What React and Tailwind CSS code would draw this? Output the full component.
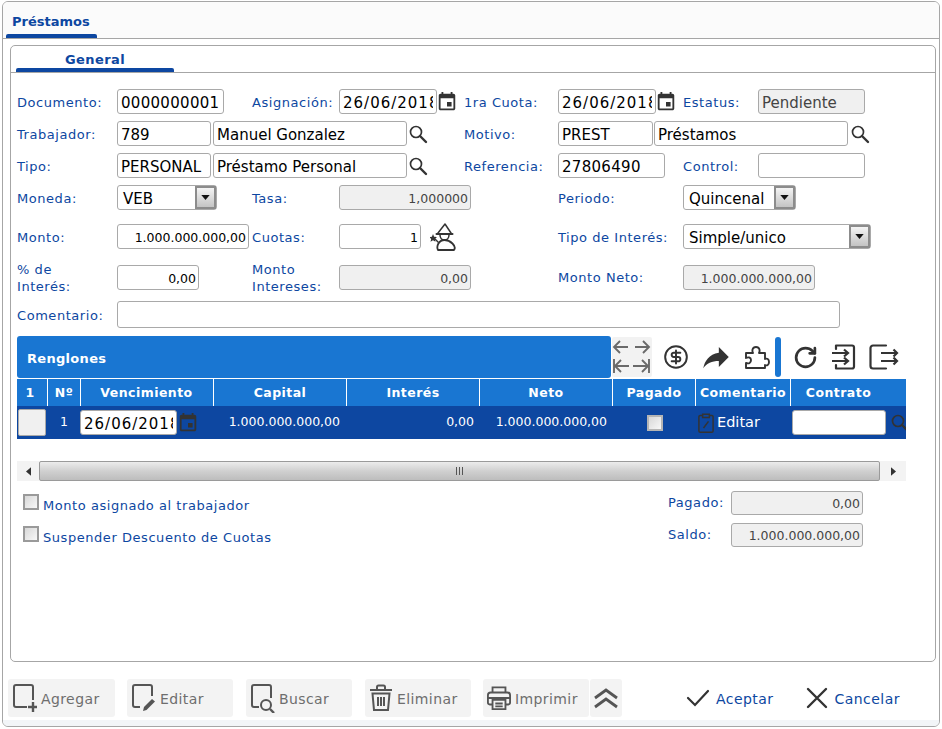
import React from "react";
import { CircleDollarSign, RotateCw } from "lucide-react";

const Label = ({ w, children, className = "", flat }) => (
  <div className={`${w} shrink-0 text-[#0d47a1] text-[13px] tracking-[0.55px] leading-[17px] ${flat ? "" : "pt-[2px]"} ${className}`}>{children}</div>
);

const Field = ({ w, h = "h-[25px]", value = "", right, gray, small, digits, date }) => (
  <div className={`${w} ${h} shrink-0`}>
    <input
      readOnly
      value={value}
      className={`block box-border h-full w-full rounded-[3px] border border-[#a9a9a9] outline-none [font-family:'DejaVu_Sans',sans-serif] ${
        small ? "text-[12.5px] pt-[1px] pl-[3px] pr-[2px]" : "text-[15px] pt-[2px] px-[3px]"
      } ${right ? "text-right" : ""} ${gray ? "bg-[#f0f0f0] text-[#444444]" : "bg-white text-black"} ${
        digits ? "tracking-[0.3px]" : ""
      } ${date ? "tracking-[1px]" : ""}`}
    />
  </div>
);

const Calendar = ({ className = "text-[#333333]" }) => (
  <svg viewBox="0 0 24 24" className={`h-[22px] w-[22px] shrink-0 ${className}`} fill="currentColor">
    <path d="M17 12h-5v5h5v-5zM16 1v2H8V1H6v2H5c-1.11 0-1.99.9-1.99 2L3 19c0 1.1.89 2 2 2h14c1.1 0 2-.9 2-2V5c0-1.1-.9-2-2-2h-1V1h-2zm3 18H5V8h14v11z" />
  </svg>
);

const Search = ({ className = "text-[#333333]" }) => (
  <svg viewBox="0 0 20 20" className={`h-[20px] w-[20px] shrink-0 ${className}`} fill="none" stroke="currentColor">
    <circle cx="8" cy="8" r="5.5" strokeWidth="1.7" />
    <path d="M12 12l6 6" strokeWidth="2.4" strokeLinecap="round" />
  </svg>
);

const Select = ({ w, h = "h-[25px]", value }) => (
  <div className={`${w} ${h} shrink-0 box-border flex items-center justify-between rounded-[3px] border border-[#a9a9a9] bg-white pl-[5px] text-[15px] text-black`}>
    <span className="pt-[3px]">{value}</span>
    <span className="flex h-full w-[21px] items-center justify-center border-[2px] border-[#8c8c8c] bg-gradient-to-b from-[#f4f4f4] to-[#c4c4c4]">
      <svg viewBox="0 0 10 6" className="h-[5px] w-[9px]"><path d="M0 0h10L5 6z" fill="#111111" /></svg>
    </span>
  </div>
);

const Wizard = () => (
  <svg viewBox="0 0 26 28" className="h-[28px] w-[26px] shrink-0" fill="none" stroke="#333333" strokeWidth="1.5" strokeLinejoin="round" strokeLinecap="round">
    <path d="M8 10l7-9 2 3 4 6" />
    <path d="M6.500 11h16" strokeWidth="2" />
    <path d="M10 12c0 3 2 5 4.500 5s4.500-2 4.500-5" />
    <path d="M8 27c-2-4 1-10 6.500-10S27 23 24 27z" strokeWidth="1.800" />
    <path d="M4 15l4 4" />
    <path d="M3 11l1.100 2.700 2.900.3-2.200 1.900.7 2.900L3 17.300.5 18.800l.7-2.900L-1 14l2.900-.3z" fill="#333333" stroke="none" />
  </svg>
);

const ExpandIcon = () => (
  <svg viewBox="0 0 40 40" className="h-[40px] w-[40px]" fill="none" stroke="#6a6a6a" strokeWidth="1.900">
    <path d="M2 10h14M8 4L2 10l6 6" />
    <path d="M23 10h14M31 4l6 6-6 6" />
    <path d="M3 29h14M9 23l-6 6 6 6M2 22v14" />
    <path d="M21 29h15M30 23l6 6-6 6M37 22v14" />
  </svg>
);

const ShareIcon = () => (
  <svg viewBox="0 0 24 24" className="h-[34px] w-[34px] shrink-0" fill="#333333">
    <path d="M14 9V5l7 7-7 7v-4.100c-5 0-8.500 1.600-11 5.100 1-5 4-10 11-11z" />
  </svg>
);

const PuzzleIcon = () => (
  <svg viewBox="0 0 25 23" className="h-[23px] w-[25px] shrink-0" fill="none" stroke="#333333" strokeWidth="1.900" strokeLinejoin="round">
    <path d="M1 7h7c-1-2-1-6 3-6s4 4 3 6h6v6c2-1 4 0 4 3s-2 4-4 3v3H1v-5c3 1 5 0 5-3s-3-3-5-2z" />
  </svg>
);

const EnterIcon = () => (
  <svg viewBox="0 0 26 26" className="h-[26px] w-[26px]" fill="none" stroke="#333333" strokeWidth="2.200">
    <path d="M5 1.500h16a2 2 0 0 1 2 2v19a2 2 0 0 1-2 2H5M5 1.500V5M5 24.500V21" strokeLinecap="round" />
    <path d="M1 9h16M13 5.500L17 9l-4 3.500M1 17h16M13 13.500L17 17l-4 3.500" />
  </svg>
);

const ExitIcon = () => (
  <svg viewBox="0 0 30 26" className="h-[26px] w-[30px]" fill="none" stroke="#333333" strokeWidth="2.200">
    <path d="M17 1.500H4a2.500 2.500 0 0 0-2.500 2.500v18A2.500 2.500 0 0 0 4 24.500h13" strokeLinecap="round" />
    <path d="M12 9h16M24.500 5.500L28 9l-3.500 3.500M12 17h16M24.500 13.500L28 17l-3.500 3.500" />
  </svg>
);

const Box = ({ className = "" }) => (
  <span className={`box-border block h-[16px] w-[16px] shrink-0 border-[2px] border-[#9a9a9a] bg-gradient-to-br from-[#d8d8d8] to-[#f8f8f8] ${className}`} />
);

const ico = { fill: "none", stroke: "#555555", strokeWidth: 2 };
const AddIcon = () => (
  <svg viewBox="0 0 26 30" className="h-[30px] w-[26px] shrink-0" {...ico}>
    <path d="M21 17V4a2 2 0 0 0-2-2H4a2 2 0 0 0-2 2v18a2 2 0 0 0 2 2h11" />
    <path d="M21 19v10M16 24h9" strokeWidth="2.400" />
  </svg>
);
const EditIcon = () => (
  <svg viewBox="0 0 26 30" className="h-[30px] w-[26px] shrink-0" {...ico}>
    <path d="M21 13V4a2 2 0 0 0-2-2H4a2 2 0 0 0-2 2v18a2 2 0 0 0 2 2h5" />
    <path d="M12 28l1-4 8-8 3 2.500-8.500 8.500z" fill="#555555" stroke="none" />
  </svg>
);
const FindIcon = () => (
  <svg viewBox="0 0 26 30" className="h-[30px] w-[26px] shrink-0" {...ico}>
    <path d="M21 15V4a2 2 0 0 0-2-2H4a2 2 0 0 0-2 2v18a2 2 0 0 0 2 2h5" />
    <circle cx="16" cy="22" r="5" />
    <path d="M20 26l4 4" strokeWidth="2.400" />
  </svg>
);
const TrashIcon = () => (
  <svg viewBox="0 0 24 28" className="h-[28px] w-[24px] shrink-0" {...ico}>
    <path d="M1 6h22M8 5V3a1.500 1.500 0 0 1 1.500-1.500h5A1.500 1.500 0 0 1 16 3v2" />
    <path d="M3.500 9.500h17L19 26H5z" />
    <path d="M9 13v9M12 13v9M15 13v9" />
  </svg>
);
const PrintIcon = () => (
  <svg viewBox="0 0 26 28" className="h-[26px] w-[24px] shrink-0" {...ico}>
    <path d="M6 8V2.500h14V8" />
    <path d="M6 21H3a2 2 0 0 1-2-2v-8a3 3 0 0 1 3-3h18a3 3 0 0 1 3 3v8a2 2 0 0 1-2 2h-3" />
    <path d="M6 16h14v10H6zM1 14h24M9 20h8M9 23h8" />
  </svg>
);

const Tool = ({ w, icon, label, gap = "gap-[3px]" }) => (
  <div className={`${w} ${gap} flex h-[38px] shrink-0 items-center rounded-[3px] bg-[#f3f3f3] pl-[4px] text-[14px] tracking-[0.4px] text-[#6e6e6e]`}>
    {icon}
    <span className="pt-[2px]">{label}</span>
  </div>
);

const HeadCell = ({ children, cls = "" }) => (
  <div className={`flex items-center justify-center border-r border-white pt-[2px] text-[12.500px] font-bold tracking-[0.45px] text-white ${cls}`}>{children}</div>
);

export default function App() {
  return (
    <div className="h-[729px] w-[942px] overflow-hidden bg-white pl-[2px] pt-[1px] [font-family:'DejaVu_Sans',sans-serif]">
      <div className="box-border flex h-[726px] w-[938px] flex-col overflow-hidden rounded-[6px] border border-[#a6a6a6] bg-white">
        {/* Tab strip */}
        <div className="box-border h-[37px] shrink-0 border-b border-[#a6a6a6] bg-[#fbfbfb] pl-[3px]">
          <div className="flex h-[36px] w-[91px] flex-col">
            <div className="flex-1 pl-[6px] pt-[12px] text-[13px] font-bold leading-[16px] text-[#0d47a1]">Préstamos</div>
            <div className="h-[4px] rounded-t-[2px] bg-[#0d47a1]" />
          </div>
        </div>

        {/* Panel */}
        <div className="ml-[7px] mt-[6px] box-border h-[617px] w-[926px] shrink-0 rounded-[5px] border border-[#a6a6a6] bg-white">
          <div className="box-border h-[27px] border-b border-[#a6a6a6] pl-[5px]">
            <div className="flex h-[26px] w-[158px] flex-col">
              <div className="flex-1 pl-[49px] pt-[6px] text-[13px] font-bold leading-[16px] tracking-[0.4px] text-[#0d47a1]">General</div>
              <div className="h-[4px] rounded-t-[2px] bg-[#0d47a1]" />
            </div>
          </div>

          <div className="pl-[6px] pt-[16px]">
            {/* Row 1 */}
            <div className="flex h-[25px] items-center">
              <Label w="w-[100px]">Documento:</Label>
              <Field w="w-[107px]" value="0000000001" digits />
              <Label w="w-[115px]" className="pl-[28px]">Asignación:</Label>
              <Field w="w-[98px]" value="26/06/2018" date />
              <span className="ml-[-1px]"><Calendar /></span>
              <Label w="w-[100px]" className="pl-[6px]">1ra Cuota:</Label>
              <Field w="w-[98px]" value="26/06/2018" date />
              <span className="ml-[-1px]"><Calendar /></span>
              <Label w="w-[81px]" className="pl-[6px] tracking-[0.9px]">Estatus:</Label>
              <Field w="w-[107px]" value="Pendiente" gray />
            </div>
            {/* Row 2 */}
            <div className="mt-[7px] flex h-[25px] items-center">
              <Label w="w-[100px]">Trabajador:</Label>
              <Field w="w-[94px]" value="789" />
              <div className="w-[2px]" />
              <Field w="w-[194px]" value="Manuel Gonzalez" />
              <span className="ml-[1px]"><Search /></span>
              <Label w="w-[130px]" className="pl-[36px]">Motivo:</Label>
              <Field w="w-[95px]" value="PREST" />
              <div className="w-[1px]" />
              <Field w="w-[194px]" value="Préstamos" />
              <span className="ml-[2px]"><Search /></span>
            </div>
            {/* Row 3 */}
            <div className="mt-[7px] flex h-[25px] items-center">
              <Label w="w-[100px]">Tipo:</Label>
              <Field w="w-[94px]" value="PERSONAL" />
              <div className="w-[2px]" />
              <Field w="w-[194px]" value="Préstamo Personal" />
              <span className="ml-[1px]"><Search /></span>
              <Label w="w-[130px]" className="pl-[36px]">Referencia:</Label>
              <Field w="w-[107px]" value="27806490" digits />
              <Label w="w-[93px]" className="pl-[18px]">Control:</Label>
              <Field w="w-[107px]" />
            </div>
            {/* Row 4 */}
            <div className="mt-[7px] flex h-[25px] items-center">
              <Label w="w-[100px]">Moneda:</Label>
              <Select w="w-[100px]" value="VEB" />
              <Label w="w-[122px]" className="pl-[35px]">Tasa:</Label>
              <Field w="w-[132px]" value="1,000000" right gray small />
              <Label w="w-[212px]" className="pl-[87px]">Periodo:</Label>
              <Select w="w-[113px]" value="Quincenal" />
            </div>
            {/* Row 5 */}
            <div className="mt-[14px] flex h-[25px] items-center">
              <Label w="w-[100px]">Monto:</Label>
              <Field w="w-[132px]" value="1.000.000.000,00" right small />
              <Label w="w-[90px]" className="pl-[3px]">Cuotas:</Label>
              <Field w="w-[82px]" value="1" right small />
              <span className="ml-[9px] mr-[-35px] w-[26px]"><Wizard /></span>
              <Label w="w-[262px]" className="pl-[137px]">Tipo de Interés:</Label>
              <Select w="w-[188px]" value="Simple/unico" />
            </div>
            {/* Row 6 */}
            <div className="mt-[16px] flex h-[25px] items-center">
              <Label flat w="w-[100px]">% de<br />Interés:</Label>
              <Field w="w-[82px]" value="0,00" right small />
              <Label flat w="w-[140px]" className="pl-[53px]">Monto<br />Intereses:</Label>
              <Field w="w-[132px]" value="0,00" right gray small />
              <Label flat w="w-[212px]" className="pl-[87px]">Monto Neto:</Label>
              <Field w="w-[132px]" value="1.000.000.000,00" right gray small />
            </div>
            {/* Row 7 */}
            <div className="mt-[11px] flex h-[27px] items-center">
              <Label w="w-[100px]">Comentario:</Label>
              <Field w="w-[723px]" h="h-[27px]" />
            </div>

            {/* Renglones toolbar */}
            <div className="mt-[8px] flex h-[42px] w-[889px] items-center">
              <div className="flex h-[42px] w-[594px] shrink-0 items-center rounded-[3px] bg-[#1976d2] pl-[10px] pt-[3px] text-[13px] font-bold tracking-[0.3px] text-white">
                Renglones
              </div>
              <div className="ml-[1px] flex h-[40px] w-[40px] shrink-0 items-center justify-center rounded-[2px] bg-[#f2f2f2]"><ExpandIcon /></div>
              <span className="ml-[9px] flex w-[30px] justify-center"><CircleDollarSign size={26} strokeWidth={1.8} color="#333333" /></span>
              <span className="ml-[10px] flex w-[30px] justify-center"><ShareIcon /></span>
              <span className="ml-[11px] flex w-[30px] justify-center"><PuzzleIcon /></span>
              <span className="ml-[3px] h-[40px] w-[6px] shrink-0 rounded-[3px] bg-[#1976d2]" />
              <span className="ml-[11px] flex w-[26px] justify-center"><RotateCw size={25} strokeWidth={2.6} color="#333333" /></span>
              <span className="ml-[13px] flex w-[26px] justify-center"><EnterIcon /></span>
              <span className="ml-[12px] flex w-[30px] justify-center"><ExitIcon /></span>
            </div>

            {/* Grid */}
            <div className="mt-[1px] w-[889px]">
              <div className="grid h-[27px] grid-cols-[31px_33px_133px_133px_133px_133px_83px_95px_115px] bg-[#1976d2]">
                <HeadCell cls="pr-[4px]">1</HeadCell>
                <HeadCell>Nº</HeadCell>
                <HeadCell cls="pr-[1px]">Vencimiento</HeadCell>
                <HeadCell>Capital</HeadCell>
                <HeadCell>Interés</HeadCell>
                <HeadCell>Neto</HeadCell>
                <HeadCell>Pagado</HeadCell>
                <HeadCell>Comentario</HeadCell>
                <HeadCell cls="border-r-0 pr-[20px]">Contrato</HeadCell>
              </div>
              <div className="grid h-[33px] grid-cols-[31px_33px_133px_133px_133px_133px_83px_95px_115px] items-center bg-[#0d47a1] text-[12.500px] text-white">
                <div className="pl-[1px]"><div className="box-border h-[27px] w-[28px] rounded-[2px] border border-[#a9a9a9] bg-[#f0f0f0]" /></div>
                <div className="pl-[12px]">1</div>
                <div className="ml-[-1px] flex h-[25px] items-center">
                  <Field w="w-[97px]" value="26/06/2018" date />
                  <Calendar />
                </div>
                <div className="pr-[7px] text-right">1.000.000.000,00</div>
                <div className="pr-[6px] text-right">0,00</div>
                <div className="pr-[6px] text-right">1.000.000.000,00</div>
                <div className="flex justify-center"><Box className="border-[#b5b5b5] from-[#cfcfcf]" /></div>
                <div className="flex items-center pl-[1px] text-[14.500px]">
                  <svg viewBox="0 0 20 24" className="h-[20px] w-[18px] shrink-0" fill="none" stroke="#333333" strokeWidth="1.800">
                    <path d="M6 3H3a1.500 1.500 0 0 0-1.500 1.500v17A1.500 1.500 0 0 0 3 23h14a1.500 1.500 0 0 0 1.500-1.500v-17A1.500 1.500 0 0 0 17 3h-3" />
                    <path d="M6 1.500h8v4H6zM7 18l6-8" />
                  </svg>
                  <span className="ml-[2px] pt-[1px]">Editar</span>
                </div>
                <div className="flex h-[25px] items-center overflow-hidden pl-[1px]">
                  <Field w="w-[94px]" />
                  <span className="ml-[4px]"><Search /></span>
                </div>
              </div>
            </div>

            {/* Scrollbar */}
            <div className="mt-[22px] flex h-[20px] w-[889px] items-center bg-[#f3f3f3]">
              <div className="flex w-[22px] shrink-0 justify-center">
                <svg viewBox="0 0 6 10" className="h-[9px] w-[5px]"><path d="M6 0v10L0 5z" fill="#333333" /></svg>
              </div>
              <div className="flex h-[20px] flex-1 items-center justify-center rounded-[2px] border border-[#9a9a9a] bg-gradient-to-b from-[#ececec] via-[#d0d0d0] to-[#bdbdbd]">
                <span className="flex gap-[2px]">
                  <i className="block h-[8px] w-[1px] bg-[#555555]" />
                  <i className="block h-[8px] w-[1px] bg-[#555555]" />
                  <i className="block h-[8px] w-[1px] bg-[#555555]" />
                </span>
              </div>
              <div className="flex w-[26px] shrink-0 justify-center">
                <svg viewBox="0 0 6 10" className="h-[9px] w-[5px]"><path d="M0 0v10l6-5z" fill="#333333" /></svg>
              </div>
            </div>

            {/* Checks + totals */}
            <div className="mt-[9px] flex h-[25px] items-center">
              <Box className="mb-[2px] ml-[6px]" />
              <Label w="w-[629px]" className="pl-[4px] pt-[6px]">Monto asignado al trabajador</Label>
              <Label w="w-[63px]" flat>Pagado:</Label>
              <Field w="w-[132px]" h="h-[24px]" value="0,00" right gray small />
            </div>
            <div className="mt-[7px] flex h-[25px] items-center">
              <Box className="mb-[2px] ml-[6px]" />
              <Label w="w-[629px]" className="pl-[4px] pt-[6px] tracking-[0.6px]">Suspender Descuento de Cuotas</Label>
              <Label w="w-[63px]" flat>Saldo:</Label>
              <Field w="w-[132px]" h="h-[24px]" value="1.000.000.000,00" right gray small />
            </div>
          </div>
        </div>

        {/* Bottom toolbar */}
        <div className="mt-[17px] flex h-[38px] shrink-0 items-center pl-[5px]">
          <Tool w="w-[107px]" icon={<AddIcon />} label="Agregar" />
          <div className="w-[12px]" />
          <Tool w="w-[106px]" icon={<EditIcon />} label="Editar" />
          <div className="w-[13px]" />
          <Tool w="w-[106px]" icon={<FindIcon />} label="Buscar" />
          <div className="w-[13px]" />
          <Tool w="w-[106px]" gap="gap-[4px]" icon={<TrashIcon />} label="Eliminar" />
          <div className="w-[12px]" />
          <Tool w="w-[106px]" gap="gap-[4px]" icon={<PrintIcon />} label="Imprimir" />
          <div className="ml-[1px] flex h-[38px] w-[32px] items-center justify-center rounded-[3px] bg-[#f3f3f3]">
            <svg viewBox="0 0 26 22" className="h-[22px] w-[26px]" fill="none" stroke="#555555" strokeWidth="2.800">
              <path d="M2 11L13 3l11 8M2 20l11-8 11 8" />
            </svg>
          </div>
          <svg viewBox="0 0 24 20" className="ml-[64px] h-[20px] w-[24px] shrink-0" fill="none" stroke="#333333" strokeWidth="2.200" strokeLinecap="round">
            <path d="M2 10l7 7L22 3" />
          </svg>
          <span className="ml-[6px] pt-[2px] text-[14px] tracking-[0.45px] text-[#0d47a1]">Aceptar</span>
          <svg viewBox="0 0 22 22" className="ml-[32px] h-[22px] w-[22px] shrink-0" fill="none" stroke="#333333" strokeWidth="2.400" strokeLinecap="round">
            <path d="M2 2l18 18M20 2L2 20" />
          </svg>
          <span className="ml-[7px] pt-[2px] text-[14px] tracking-[0.45px] text-[#0d47a1]">Cancelar</span>
        </div>
        <div className="mt-[3px] flex-1 bg-[#f2f5f8]" />
      </div>
    </div>
  );
}
